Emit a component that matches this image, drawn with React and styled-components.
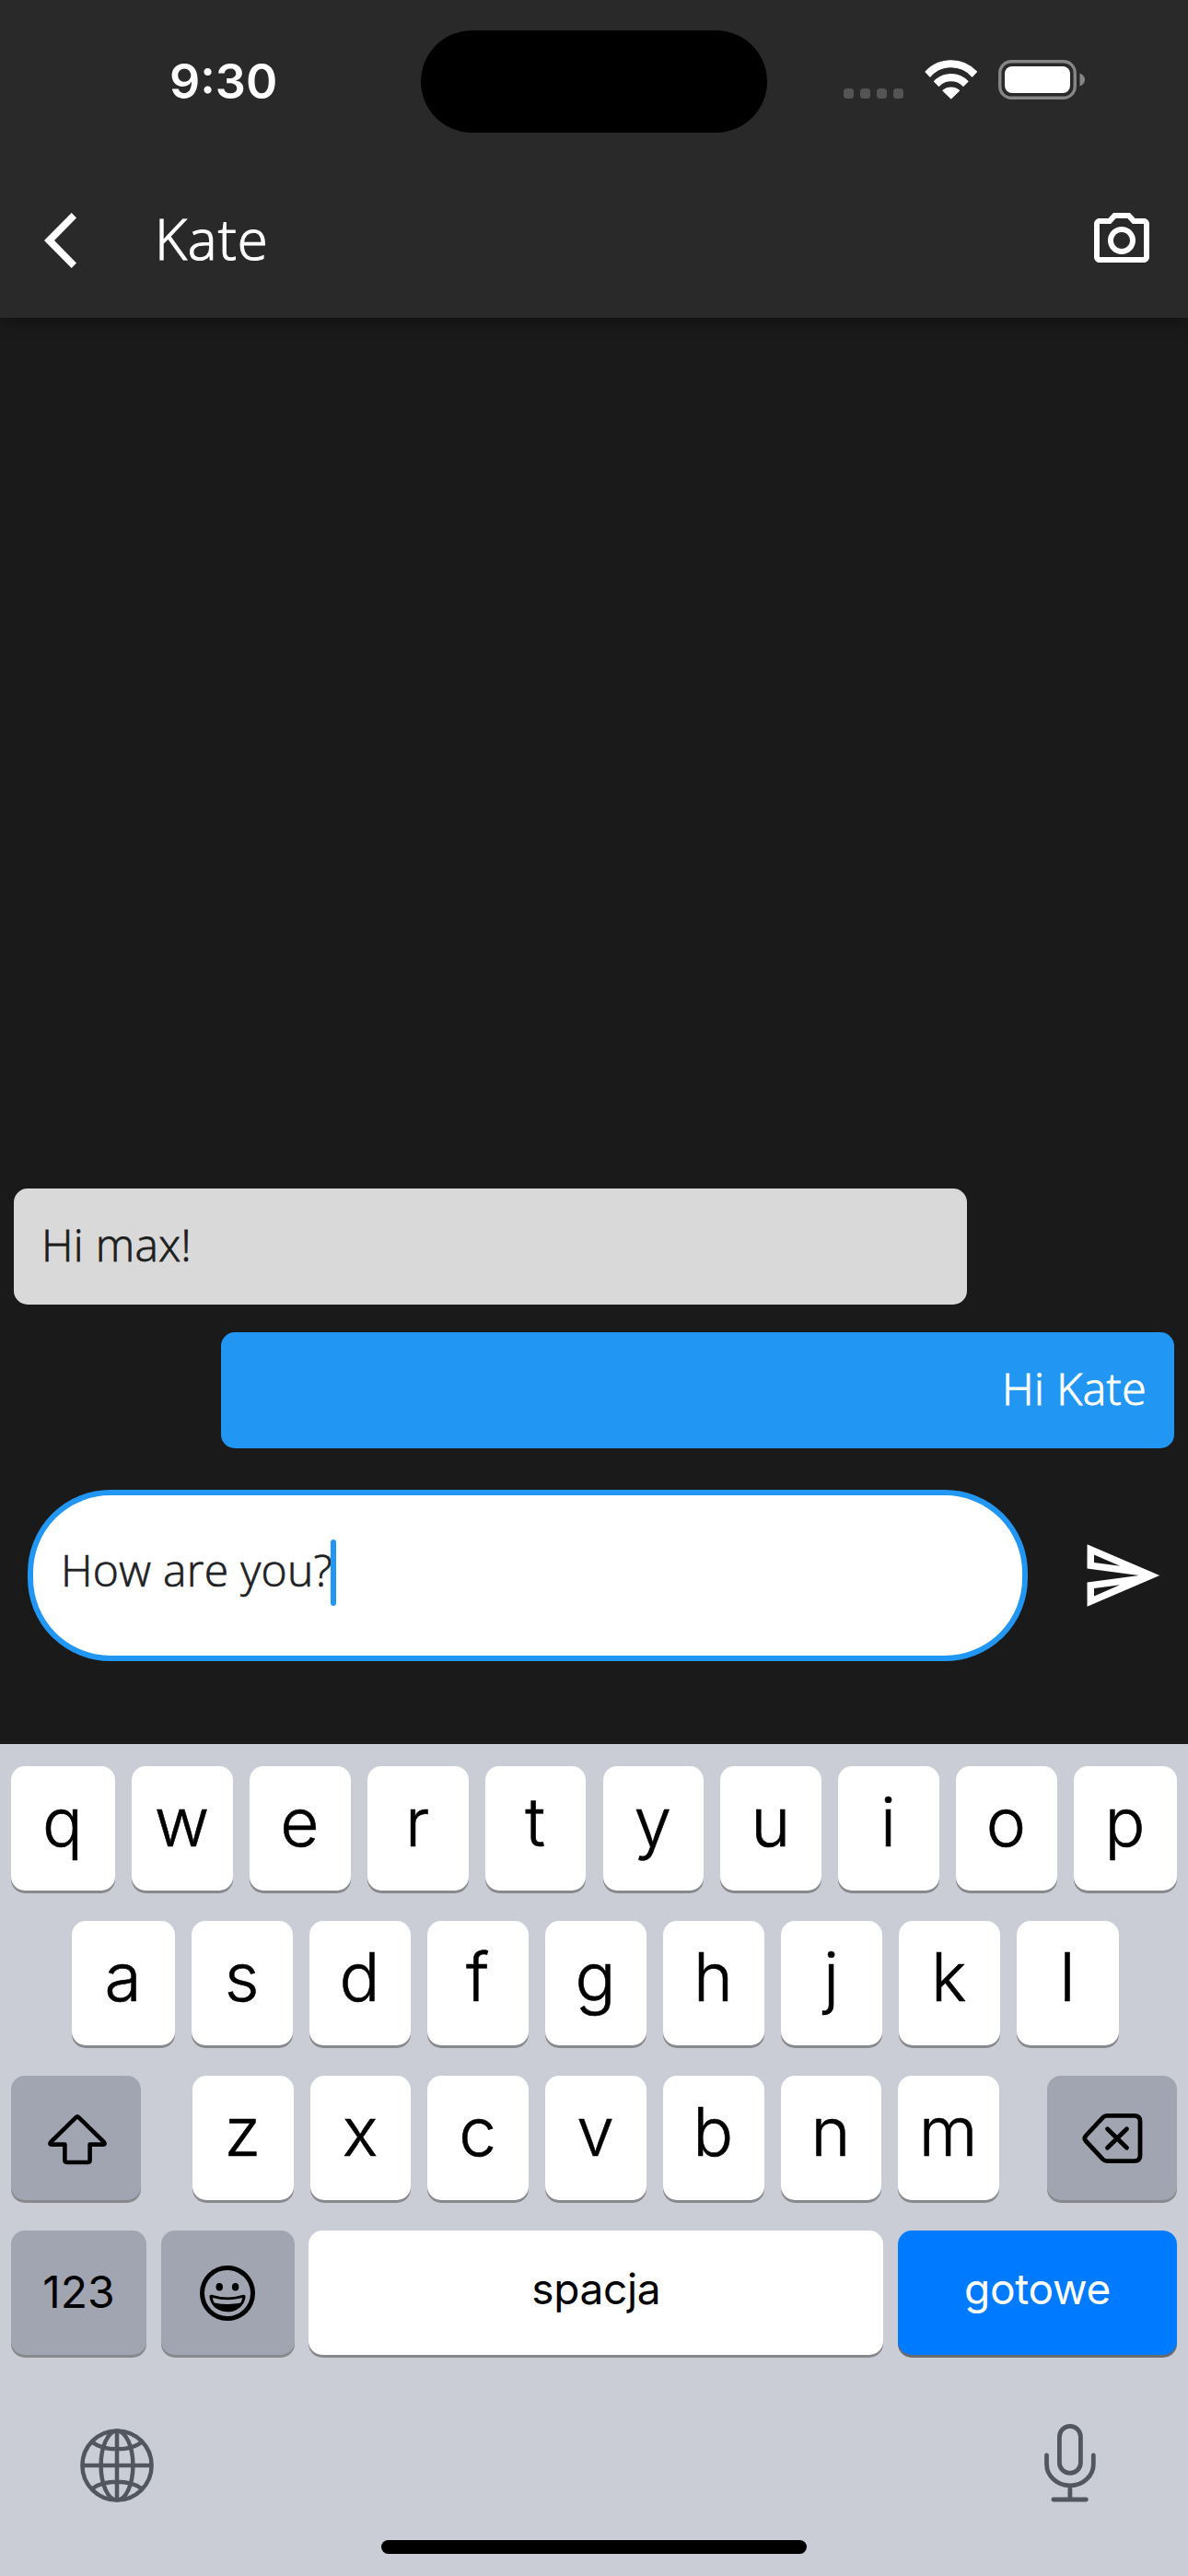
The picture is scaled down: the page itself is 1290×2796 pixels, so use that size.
import React from 'react';
import styled, { createGlobalStyle, css } from 'styled-components';

const ui = "Inter, 'Liberation Sans', sans-serif";
const app = "'Open Sans', 'Noto Sans', sans-serif";

const GlobalStyle = createGlobalStyle`
  *, *::before, *::after { box-sizing: border-box; }
  body { margin: 0; background: #1a1a1a; }
  svg { display: block; flex: none; }
`;

const Screen = styled.div`
  width: 1290px;
  height: 2796px;
  display: flex;
  flex-direction: column;
  overflow: hidden;
  background: #1a1a1a;
`;

/* ---------- header ---------- */

const Header = styled.header`
  flex: none;
  height: 345px;
  background: #292929;
  box-shadow: 0 6px 15px rgba(0, 0, 0, 0.3);
`;

const StatusBar = styled.div`
  height: 177px;
  display: grid;
  grid-template-columns: 457px 376px 1fr;
  align-items: center;
`;

const Clock = styled.time`
  padding-left: 184px;
  font: 600 52px/62px ${ui};
  color: #fff;
`;

const Island = styled.div`
  height: 111px;
  border-radius: 56px;
  background: #000;
`;

const StatusIcons = styled.div`
  display: flex;
  align-items: center;
  gap: 22.5px;
  padding: 0 0 4px 83px;
`;

const AppBar = styled.div`
  height: 168px;
  display: flex;
  align-items: center;
  padding: 0 36px 0 48px;
`;

const Title = styled.h1`
  flex: 1;
  margin: 0;
  padding: 0 0 4px 85px;
  font: 300 60px/82px ${app};
  letter-spacing: 1px;
  -webkit-text-stroke: 1.2px #fff;
  color: #fff;
`;

/* ---------- conversation ---------- */

const Messages = styled.main`
  flex: 1;
  display: flex;
  flex-direction: column;
  justify-content: flex-end;
  gap: 30px;
  padding: 0 15px 45px;
`;

const Bubble = styled.div`
  width: 1035px;
  height: 126px;
  display: flex;
  align-items: center;
  padding: 0 30px 5px;
  border-radius: 15px;
  font: 300 48px/66px ${app};
  ${({ $mine }) =>
    $mine
      ? css`
          align-self: flex-end;
          justify-content: flex-end;
          background: #2196f3;
          color: #fff;
          letter-spacing: 0.5px;
          -webkit-text-stroke: 1px #fff;
        `
      : css`
          align-self: flex-start;
          background: #d9d9d9;
          color: #1d1d1d;
          letter-spacing: 0.3px;
          -webkit-text-stroke: 0.8px #1d1d1d;
        `}
`;

const Composer = styled.div`
  flex: none;
  display: flex;
  align-items: center;
  justify-content: space-between;
  padding: 0 27px 90px 30px;
`;

const Field = styled.div`
  width: 1086px;
  height: 186px;
  display: flex;
  align-items: center;
  padding: 0 30px;
  border: 6px solid #2196f3;
  border-radius: 90px;
  background: #fff;
`;

const FieldText = styled.span`
  padding-bottom: 12px;
  font: 300 48px/66px ${app};
  letter-spacing: 0.3px;
  white-space: nowrap;
  color: #202124;
  -webkit-text-stroke: 0.7px #202124;
`;

const Caret = styled.i`
  width: 6px;
  height: 72px;
  margin: 0 0 6px -2px;
  border-radius: 3px;
  background: #2196f3;
`;

/* ---------- keyboard ---------- */

const Keyboard = styled.section`
  flex: none;
  height: 903px;
  display: flex;
  flex-direction: column;
  padding: 24px 12px;
  background: #cbcdd6;
`;

const Rows = styled.div`
  display: flex;
  flex-direction: column;
  gap: 33px;
`;

const KeyRow = styled.div`
  display: grid;
  grid-template-columns: ${({ $columns }) => $columns};
  column-gap: ${({ $gap = '18.2px' }) => $gap};
  padding: ${({ $inset = '0' }) => $inset};
`;

const faces = {
  light: { background: '#fff', color: '#000', shadow: '#88898d' },
  dark: { background: '#a0a5b1', color: '#000', shadow: '#88898d' },
  action: { background: '#007bff', color: '#fff', shadow: '#6a6b6e' },
};

const Key = styled.div`
  height: 135px;
  display: flex;
  align-items: center;
  justify-content: center;
  border-radius: 15px;
  background: ${({ $face = 'light' }) => faces[$face].background};
  box-shadow: 0 3px 0 ${({ $face = 'light' }) => faces[$face].shadow};
  color: ${({ $face = 'light' }) => faces[$face].color};
`;

const Letter = styled.span`
  padding: 0 1px 14px 0;
  font: 300 73px/88px ${ui};
  -webkit-text-stroke: 0.6px currentColor;
`;

const Label = styled.span`
  padding-bottom: 9px;
  font: 400 46px/56px ${ui};
  letter-spacing: -0.3px;
`;

const Digits = styled.span`
  padding-bottom: 2px;
  font: 400 48px/58px ${ui};
`;

const Dock = styled.div`
  display: flex;
  justify-content: space-between;
  align-items: flex-end;
  height: 160px;
  padding: 0 88px 0 75px;
`;

const HomeIndicator = styled.div`
  align-self: center;
  width: 462px;
  height: 15px;
  margin-top: 41px;
  border-radius: 8px;
  background: #000;
`;

/* ---------- icons ---------- */

const Signal = () => (
  <svg width="65" height="43" fill="#545454">
    {[0, 18, 36, 54].map((x) => (
      <rect key={x} x={x} y="31" width="11" height="11" rx="3.5" />
    ))}
  </svg>
);

const Wifi = () => (
  <svg width="58" height="43" fill="#fff" stroke="#fff" strokeWidth="1.2" strokeLinejoin="round">
    <path d="M1 12.8A38 38 0 0 1 56.5 12.8L51.6 18A30.5 30.5 0 0 0 5.9 18Z" />
    <path d="M10.5 23.4A25 25 0 0 1 47 23.4L42 28.3A18.5 18.5 0 0 0 15.5 28.3Z" />
    <path d="M20 33.2A13.5 13.5 0 0 1 37.5 33.2L28.75 41.8Z" />
  </svg>
);

const Battery = () => (
  <svg width="95" height="43">
    <rect x="1.75" y="1.75" width="81.5" height="39.5" rx="12.5" fill="none" stroke="#868686" strokeWidth="3.4" />
    <rect x="7" y="7" width="71" height="29" rx="8" fill="#fff" />
    <path d="M88.5 14.5C92 15.8 94 18.4 94 21.5S92 27.2 88.5 28.5Z" fill="#868686" />
  </svg>
);

const Back = () => (
  <svg width="35" height="60" fill="#fff">
    <path d="M29.7 0L35 5.5L11 30L35 54.5L29.700 60L0 30Z" />
  </svg>
);

const Camera = () => (
  <svg width="72" height="72" viewBox="0 0 24 24" fill="#fff">
    <path d="M14.12 4l1.83 2H20v12H4V6h4.05l1.83-2h4.24M15 2H9L7.17 4H4c-1.1 0-2 .9-2 2v12c0 1.1.9 2 2 2h16c1.1 0 2-.9 2-2V6c0-1.1-.9-2-2-2h-3.17L15 2zm-3 7c1.65 0 3 1.35 3 3s-1.35 3-3 3-3-1.35-3-3 1.35-3 3-3m0-2c-2.76 0-5 2.24-5 5s2.24 5 5 5 5-2.24 5-5-2.24-5-5-5z" />
  </svg>
);

const Send = () => (
  <svg width="90" height="90" viewBox="0 0 24 24" fill="#fff">
    <path d="M4.01 6.03l7.51 3.22-7.52-1 .01-2.22m7.5 8.72L4 17.97v-2.22l7.51-1M2.01 3L2 10l15 2-15 2 .01 7L23 12 2.01 3z" />
  </svg>
);

const Shift = () => (
  <svg width="66" height="58" viewBox="-2 -3 66 58" fill="none" stroke="#000" strokeWidth="4.6" strokeLinejoin="round">
    <path d="M30.6 3.2Q32 1.8 33.4 3.2L61 30.2Q62.6 32.6 60 32.6H45.6V49.5Q45.6 52 43 52H21Q18.4 52 18.4 49.5V32.6H4Q1.4 32.6 3 30.2Z" />
  </svg>
);

const Backspace = () => (
  <svg width="66" height="56" viewBox="0 -1 66 56" fill="none" stroke="#000" strokeWidth="4.8" strokeLinecap="round" strokeLinejoin="round">
    <path d="M27 2.4H56.5Q63 2.4 63 8.500V45.500Q63 51.600 56.500 51.600H27Q24.500 51.600 22.500 49.600L4.200 30Q1.500 27 4.200 24L22.500 4.400Q24.500 2.400 27 2.400Z" />
    <path d="M27.500 16.700L48.500 37.300M48.500 16.700L27.500 37.300" />
  </svg>
);

const Emoji = () => (
  <svg width="60" height="60">
    <circle cx="30" cy="30" r="27.5" fill="none" stroke="#000" strokeWidth="5" />
    <ellipse cx="21.2" cy="23.3" rx="3.7" ry="4.3" />
    <ellipse cx="38.6" cy="23.3" rx="3.7" ry="4.3" />
    <path d="M10.4 33.5Q10.6 31.2 13 31.8Q30 37.2 47 31.8Q49.4 31.2 49.6 33.5C48.8 43.5 40.5 50.3 30 50.3S11.2 43.5 10.4 33.5Z" />
    <path d="M13.8 35Q30 39.6 46.2 35Q45.6 38.5 44.3 40.4Q30 43.4 15.7 40.4Q14.4 38.5 13.8 35Z" fill="#a0a5b1" />
  </svg>
);

const Globe = () => (
  <svg width="80" height="80" fill="none" stroke="#51565f" strokeWidth="4.5">
    <circle cx="40" cy="40" r="37.6" />
    <ellipse cx="40" cy="40" rx="17.4" ry="37.6" />
    <path d="M40 2V78M2 40H78M13.5 15Q23 22.3 40 22.3T66.5 15M13.5 65Q23 57.7 40 57.7T66.5 65" />
  </svg>
);

const Mic = () => (
  <svg width="56" height="85" fill="none" stroke="#51565f" strokeWidth="4.8" strokeLinecap="round">
    <rect x="16.4" y="2.4" width="23" height="51" rx="11.5" />
    <path d="M2.5 34V43.5A25.4 23.4 0 0 0 53.3 43.5V34M27.9 67V80M9.9 82H45.4" />
  </svg>
);

/* ---------- screen ---------- */

const MiddleKeys = styled.div`
  display: grid;
  grid-template-columns: repeat(7, 1fr);
  column-gap: 18.2px;
  padding: 0 52px 0 56px;
`;

const messages = [
  { text: 'Hi max!', mine: false },
  { text: 'Hi Kate', mine: true },
];

const letters = (row) =>
  [...row].map((char) => (
    <Key key={char}>
      <Letter>{char}</Letter>
    </Key>
  ));

export default function App() {
  return (
    <Screen>
      <GlobalStyle />
      <Header>
        <StatusBar>
          <Clock>9:30</Clock>
          <Island />
          <StatusIcons>
            <Signal />
            <Wifi />
            <Battery />
          </StatusIcons>
        </StatusBar>
        <AppBar>
          <Back />
          <Title>Kate</Title>
          <Camera />
        </AppBar>
      </Header>

      <Messages>
        {messages.map(({ text, mine }) => (
          <Bubble key={text} $mine={mine}>
            {text}
          </Bubble>
        ))}
      </Messages>

      <Composer>
        <Field>
          <FieldText>How are you?</FieldText>
          <Caret />
        </Field>
        <Send />
      </Composer>

      <Keyboard>
        <Rows>
          <KeyRow $columns="113px repeat(8, 1fr) 112px">{letters('qwertyuiop')}</KeyRow>
          <KeyRow $columns="112px repeat(7, 1fr) 111px" $inset="0 63px 0 66px">
            {letters('asdfghjkl')}
          </KeyRow>
          <KeyRow $columns="141px 1fr 141px" $gap="0">
            <Key $face="dark">
              <Shift />
            </Key>
            <MiddleKeys>{letters('zxcvbnm')}</MiddleKeys>
            <Key $face="dark">
              <Backspace />
            </Key>
          </KeyRow>
          <KeyRow $columns="147px 145px 624px 303px" $gap="15.67px">
            <Key $face="dark">
              <Digits>123</Digits>
            </Key>
            <Key $face="dark">
              <Emoji />
            </Key>
            <Key>
              <Label>spacja</Label>
            </Key>
            <Key $face="action">
              <Label>gotowe</Label>
            </Key>
          </KeyRow>
        </Rows>
        <Dock>
          <Globe />
          <Mic />
        </Dock>
        <HomeIndicator />
      </Keyboard>
    </Screen>
  );
}
